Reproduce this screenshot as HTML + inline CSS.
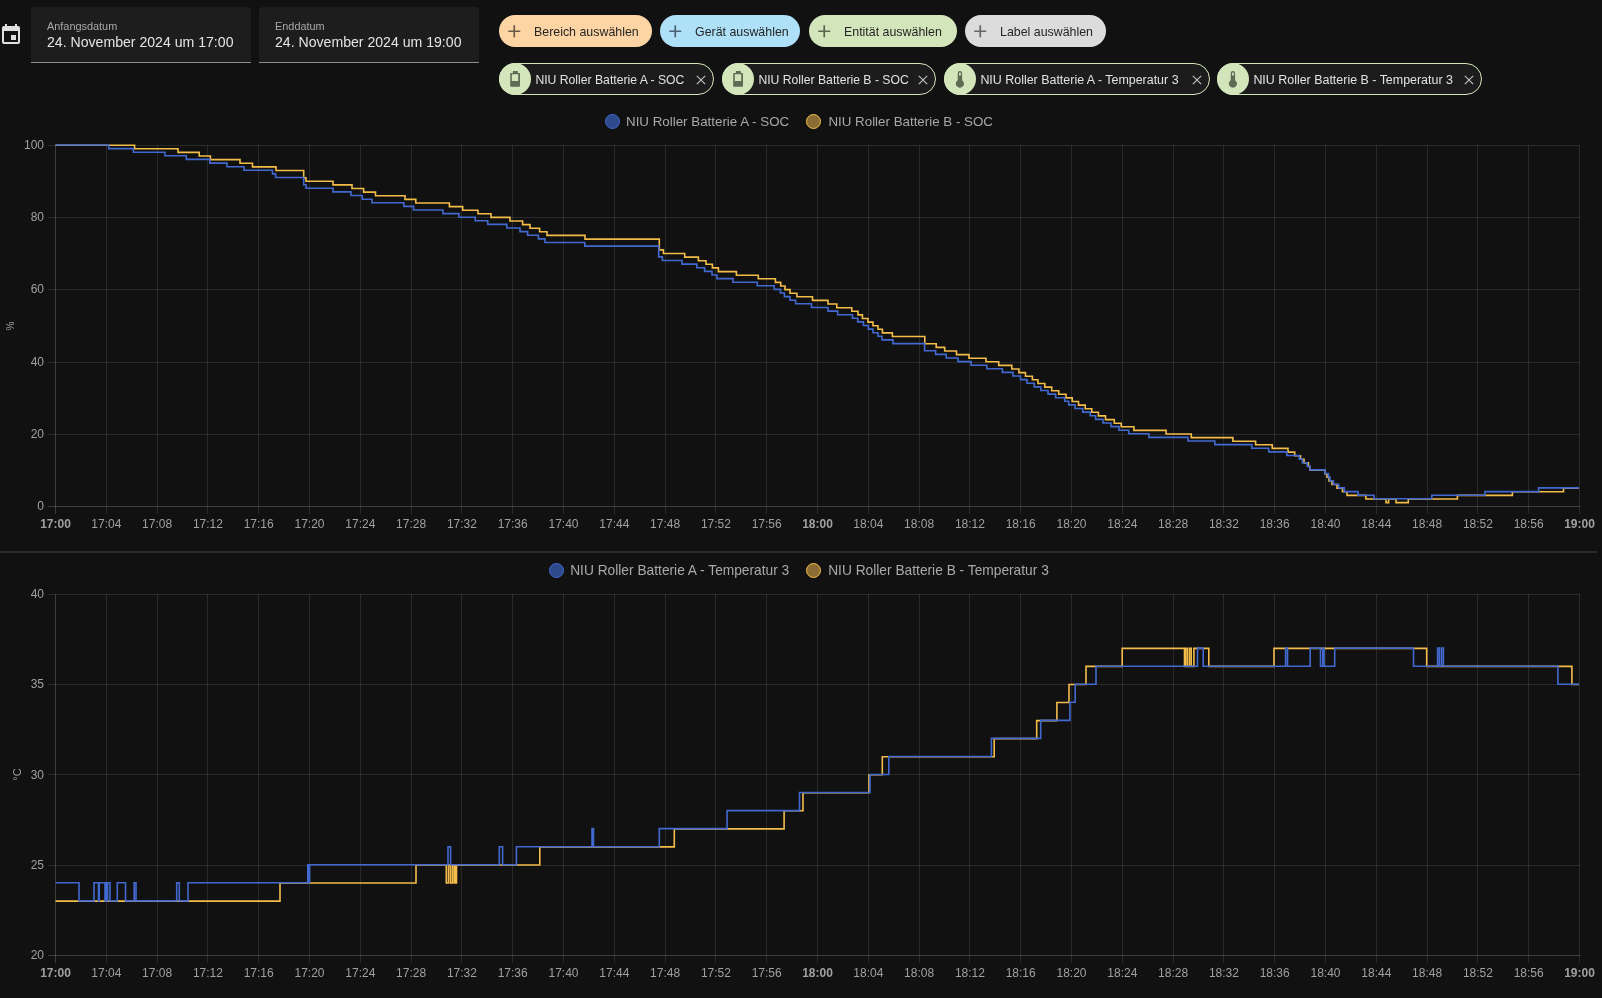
<!DOCTYPE html>
<html><head><meta charset="utf-8">
<style>
html,body{margin:0;padding:0;background:#111111;width:1602px;height:998px;overflow:hidden;font-family:"Liberation Sans",sans-serif;position:relative}
.abs{position:absolute}
.gs{position:absolute;left:0;top:0;width:1602px;height:998px;will-change:transform}
.field{position:absolute;top:7px;height:55px;width:220px;background:#1d1d1d;border-radius:4px 4px 0 0;border-bottom:1px solid #8c8c8c}
.field .lab{position:absolute;left:16px;top:11.2px;line-height:16px;font-size:10.9px;color:#a8a8a8;white-space:nowrap}
.field .val{position:absolute;left:16px;top:27.1px;line-height:16px;font-size:14.1px;color:#e4e4e4;white-space:nowrap}
.chip{position:absolute;top:15px;height:32px;border-radius:16px;font-size:12.4px;color:#262626;white-space:nowrap}
.chip .plus{position:absolute;left:4.7px;top:6px;width:20.5px;height:20.5px}
.chip .t{position:absolute;top:8.7px;line-height:16px}
.ent{position:absolute;top:63px;height:30px;box-sizing:content-box;border:1px solid #d3e6bb;border-radius:16px;background:#1c1c1c;color:#e2e2e2;font-size:12.2px;white-space:nowrap}
.ent .ic{position:absolute;left:-1px;top:-1px;width:32px;height:32px;border-radius:16px;background:#d3e6bb}
.ent .t{position:absolute;left:35.4px;top:8px;line-height:16px}
.ent .x{position:absolute;top:10.3px;width:12px;height:12px}
.lg{position:absolute;font-size:13.35px;line-height:16px;color:#a9a9a9;white-space:nowrap}
.dot{position:absolute;width:15px;height:15px;border-radius:50%;box-sizing:border-box;border:1.5px solid}
</style></head><body><div class="gs">
<!-- calendar icon -->
<svg class="abs" style="left:-1px;top:23px" width="24" height="24" viewBox="0 0 24 24"><path fill="#e1e1e1" d="M19 19H5V8h14m-3-7v2H8V1H6v2H5c-1.11 0-2 .89-2 2v14a2 2 0 0 0 2 2h14a2 2 0 0 0 2-2V5a2 2 0 0 0-2-2h-1V1m-1 11h-5v5h5z"/></svg>
<div class="field" style="left:31px"><div class="lab">Anfangsdatum</div><div class="val">24. November 2024 um 17:00</div></div>
<div class="field" style="left:259px"><div class="lab">Enddatum</div><div class="val">24. November 2024 um 19:00</div></div>

<div class="chip" style="left:499px;width:153px;background:#fdd5a5"><svg class="plus" viewBox="0 0 24 24"><path fill="#6b5a45" d="M19 13h-6v6h-2v-6H5v-2h6V5h2v6h6z"/></svg><span class="t" style="left:35px">Bereich auswählen</span></div>
<div class="chip" style="left:660px;width:140px;background:#aee0f8"><svg class="plus" viewBox="0 0 24 24"><path fill="#4a6270" d="M19 13h-6v6h-2v-6H5v-2h6V5h2v6h6z"/></svg><span class="t" style="left:35px">Gerät auswählen</span></div>
<div class="chip" style="left:809px;width:148px;background:#d3e6bb"><svg class="plus" viewBox="0 0 24 24"><path fill="#5a6650" d="M19 13h-6v6h-2v-6H5v-2h6V5h2v6h6z"/></svg><span class="t" style="left:35px">Entität auswählen</span></div>
<div class="chip" style="left:965px;width:141px;background:#dcdcdc"><svg class="plus" viewBox="0 0 24 24"><path fill="#666" d="M19 13h-6v6h-2v-6H5v-2h6V5h2v6h6z"/></svg><span class="t" style="left:35px">Label auswählen</span></div>

<div class="ent" style="left:499px;width:213px"><div class="ic"><svg width="32" height="32" style="position:absolute;left:0;top:0"><rect x="13.9" y="8" width="4.9" height="2" fill="#5f6b55"/><path fill="#5f6b55" fill-rule="evenodd" d="M12 10h8.2a.8.8 0 0 1 .8.8v12.2a.8.8 0 0 1-.8.8H12a.8.8 0 0 1-.8-.8V10.8a.8.8 0 0 1 .8-.8zM12.8 11.3v6.8h6.4v-6.8z"/></svg></div><span class="t">NIU Roller Batterie A - SOC</span><svg class="x" style="left:195.2px" viewBox="0 0 12 12"><path d="M1.8 1.8L10.2 10.2M10.2 1.8L1.8 10.2" stroke="#c4c4c4" stroke-width="1.1"/></svg></div>
<div class="ent" style="left:722px;width:211.5px"><div class="ic"><svg width="32" height="32" style="position:absolute;left:0;top:0"><rect x="13.9" y="8" width="4.9" height="2" fill="#5f6b55"/><path fill="#5f6b55" fill-rule="evenodd" d="M12 10h8.2a.8.8 0 0 1 .8.8v12.2a.8.8 0 0 1-.8.8H12a.8.8 0 0 1-.8-.8V10.8a.8.8 0 0 1 .8-.8zM12.8 11.3v6.8h6.4v-6.8z"/></svg></div><span class="t">NIU Roller Batterie B - SOC</span><svg class="x" style="left:193.7px" viewBox="0 0 12 12"><path d="M1.8 1.8L10.2 10.2M10.2 1.8L1.8 10.2" stroke="#c4c4c4" stroke-width="1.1"/></svg></div>
<div class="ent" style="left:944px;width:263.5px"><div class="ic"><svg width="32" height="32" style="position:absolute;left:0;top:0"><path fill="#5f6b55" d="M13.7 10.2a2.2 2.2 0 0 1 4.4 0V17.2a4.1 4.1 0 1 1-4.4 0z"/><rect x="15" y="9.6" width="1.9" height="3" rx="0.9" fill="#d3e6bb"/></svg></div><span class="t" style="font-size:12.45px">NIU Roller Batterie A - Temperatur 3</span><svg class="x" style="left:245.7px" viewBox="0 0 12 12"><path d="M1.8 1.8L10.2 10.2M10.2 1.8L1.8 10.2" stroke="#c4c4c4" stroke-width="1.1"/></svg></div>
<div class="ent" style="left:1217px;width:262.5px"><div class="ic"><svg width="32" height="32" style="position:absolute;left:0;top:0"><path fill="#5f6b55" d="M13.7 10.2a2.2 2.2 0 0 1 4.4 0V17.2a4.1 4.1 0 1 1-4.4 0z"/><rect x="15" y="9.6" width="1.9" height="3" rx="0.9" fill="#d3e6bb"/></svg></div><span class="t" style="font-size:12.45px">NIU Roller Batterie B - Temperatur 3</span><svg class="x" style="left:244.7px" viewBox="0 0 12 12"><path d="M1.8 1.8L10.2 10.2M10.2 1.8L1.8 10.2" stroke="#c4c4c4" stroke-width="1.1"/></svg></div>
<svg width="1602" height="998" style="position:absolute;left:0;top:0">
<g stroke-width="1" shape-rendering="crispEdges"><line stroke="#fff" stroke-opacity="0.19" x1="55.5" y1="145" x2="55.5" y2="514"/><line stroke="#fff" stroke-opacity="0.1" x1="106.5" y1="145" x2="106.5" y2="514"/><line stroke="#fff" stroke-opacity="0.1" x1="157.5" y1="145" x2="157.5" y2="514"/><line stroke="#fff" stroke-opacity="0.1" x1="207.5" y1="145" x2="207.5" y2="514"/><line stroke="#fff" stroke-opacity="0.1" x1="258.5" y1="145" x2="258.5" y2="514"/><line stroke="#fff" stroke-opacity="0.1" x1="309.5" y1="145" x2="309.5" y2="514"/><line stroke="#fff" stroke-opacity="0.1" x1="360.5" y1="145" x2="360.5" y2="514"/><line stroke="#fff" stroke-opacity="0.1" x1="411.5" y1="145" x2="411.5" y2="514"/><line stroke="#fff" stroke-opacity="0.1" x1="461.5" y1="145" x2="461.5" y2="514"/><line stroke="#fff" stroke-opacity="0.1" x1="512.5" y1="145" x2="512.5" y2="514"/><line stroke="#fff" stroke-opacity="0.1" x1="563.5" y1="145" x2="563.5" y2="514"/><line stroke="#fff" stroke-opacity="0.1" x1="614.5" y1="145" x2="614.5" y2="514"/><line stroke="#fff" stroke-opacity="0.1" x1="665.5" y1="145" x2="665.5" y2="514"/><line stroke="#fff" stroke-opacity="0.1" x1="715.5" y1="145" x2="715.5" y2="514"/><line stroke="#fff" stroke-opacity="0.1" x1="766.5" y1="145" x2="766.5" y2="514"/><line stroke="#fff" stroke-opacity="0.1" x1="817.5" y1="145" x2="817.5" y2="514"/><line stroke="#fff" stroke-opacity="0.1" x1="868.5" y1="145" x2="868.5" y2="514"/><line stroke="#fff" stroke-opacity="0.1" x1="919.5" y1="145" x2="919.5" y2="514"/><line stroke="#fff" stroke-opacity="0.1" x1="969.5" y1="145" x2="969.5" y2="514"/><line stroke="#fff" stroke-opacity="0.1" x1="1020.5" y1="145" x2="1020.5" y2="514"/><line stroke="#fff" stroke-opacity="0.1" x1="1071.5" y1="145" x2="1071.5" y2="514"/><line stroke="#fff" stroke-opacity="0.1" x1="1122.5" y1="145" x2="1122.5" y2="514"/><line stroke="#fff" stroke-opacity="0.1" x1="1173.5" y1="145" x2="1173.5" y2="514"/><line stroke="#fff" stroke-opacity="0.1" x1="1223.5" y1="145" x2="1223.5" y2="514"/><line stroke="#fff" stroke-opacity="0.1" x1="1274.5" y1="145" x2="1274.5" y2="514"/><line stroke="#fff" stroke-opacity="0.1" x1="1325.5" y1="145" x2="1325.5" y2="514"/><line stroke="#fff" stroke-opacity="0.1" x1="1376.5" y1="145" x2="1376.5" y2="514"/><line stroke="#fff" stroke-opacity="0.1" x1="1427.5" y1="145" x2="1427.5" y2="514"/><line stroke="#fff" stroke-opacity="0.1" x1="1477.5" y1="145" x2="1477.5" y2="514"/><line stroke="#fff" stroke-opacity="0.1" x1="1528.5" y1="145" x2="1528.5" y2="514"/><line stroke="#fff" stroke-opacity="0.1" x1="1579.5" y1="145" x2="1579.5" y2="514"/><line stroke="#fff" stroke-opacity="0.19" x1="48" y1="506.5" x2="1579.5" y2="506.5"/><line stroke="#fff" stroke-opacity="0.1" x1="48" y1="434.5" x2="1579.5" y2="434.5"/><line stroke="#fff" stroke-opacity="0.1" x1="48" y1="362.5" x2="1579.5" y2="362.5"/><line stroke="#fff" stroke-opacity="0.1" x1="48" y1="289.5" x2="1579.5" y2="289.5"/><line stroke="#fff" stroke-opacity="0.1" x1="48" y1="217.5" x2="1579.5" y2="217.5"/><line stroke="#fff" stroke-opacity="0.1" x1="48" y1="145.5" x2="1579.5" y2="145.5"/><line stroke="#fff" stroke-opacity="0.19" x1="55.5" y1="594" x2="55.5" y2="963"/><line stroke="#fff" stroke-opacity="0.1" x1="106.5" y1="594" x2="106.5" y2="963"/><line stroke="#fff" stroke-opacity="0.1" x1="157.5" y1="594" x2="157.5" y2="963"/><line stroke="#fff" stroke-opacity="0.1" x1="207.5" y1="594" x2="207.5" y2="963"/><line stroke="#fff" stroke-opacity="0.1" x1="258.5" y1="594" x2="258.5" y2="963"/><line stroke="#fff" stroke-opacity="0.1" x1="309.5" y1="594" x2="309.5" y2="963"/><line stroke="#fff" stroke-opacity="0.1" x1="360.5" y1="594" x2="360.5" y2="963"/><line stroke="#fff" stroke-opacity="0.1" x1="411.5" y1="594" x2="411.5" y2="963"/><line stroke="#fff" stroke-opacity="0.1" x1="461.5" y1="594" x2="461.5" y2="963"/><line stroke="#fff" stroke-opacity="0.1" x1="512.5" y1="594" x2="512.5" y2="963"/><line stroke="#fff" stroke-opacity="0.1" x1="563.5" y1="594" x2="563.5" y2="963"/><line stroke="#fff" stroke-opacity="0.1" x1="614.5" y1="594" x2="614.5" y2="963"/><line stroke="#fff" stroke-opacity="0.1" x1="665.5" y1="594" x2="665.5" y2="963"/><line stroke="#fff" stroke-opacity="0.1" x1="715.5" y1="594" x2="715.5" y2="963"/><line stroke="#fff" stroke-opacity="0.1" x1="766.5" y1="594" x2="766.5" y2="963"/><line stroke="#fff" stroke-opacity="0.1" x1="817.5" y1="594" x2="817.5" y2="963"/><line stroke="#fff" stroke-opacity="0.1" x1="868.5" y1="594" x2="868.5" y2="963"/><line stroke="#fff" stroke-opacity="0.1" x1="919.5" y1="594" x2="919.5" y2="963"/><line stroke="#fff" stroke-opacity="0.1" x1="969.5" y1="594" x2="969.5" y2="963"/><line stroke="#fff" stroke-opacity="0.1" x1="1020.5" y1="594" x2="1020.5" y2="963"/><line stroke="#fff" stroke-opacity="0.1" x1="1071.5" y1="594" x2="1071.5" y2="963"/><line stroke="#fff" stroke-opacity="0.1" x1="1122.5" y1="594" x2="1122.5" y2="963"/><line stroke="#fff" stroke-opacity="0.1" x1="1173.5" y1="594" x2="1173.5" y2="963"/><line stroke="#fff" stroke-opacity="0.1" x1="1223.5" y1="594" x2="1223.5" y2="963"/><line stroke="#fff" stroke-opacity="0.1" x1="1274.5" y1="594" x2="1274.5" y2="963"/><line stroke="#fff" stroke-opacity="0.1" x1="1325.5" y1="594" x2="1325.5" y2="963"/><line stroke="#fff" stroke-opacity="0.1" x1="1376.5" y1="594" x2="1376.5" y2="963"/><line stroke="#fff" stroke-opacity="0.1" x1="1427.5" y1="594" x2="1427.5" y2="963"/><line stroke="#fff" stroke-opacity="0.1" x1="1477.5" y1="594" x2="1477.5" y2="963"/><line stroke="#fff" stroke-opacity="0.1" x1="1528.5" y1="594" x2="1528.5" y2="963"/><line stroke="#fff" stroke-opacity="0.1" x1="1579.5" y1="594" x2="1579.5" y2="963"/><line stroke="#fff" stroke-opacity="0.19" x1="48" y1="955.5" x2="1579.5" y2="955.5"/><line stroke="#fff" stroke-opacity="0.1" x1="48" y1="865.5" x2="1579.5" y2="865.5"/><line stroke="#fff" stroke-opacity="0.1" x1="48" y1="774.5" x2="1579.5" y2="774.5"/><line stroke="#fff" stroke-opacity="0.1" x1="48" y1="684.5" x2="1579.5" y2="684.5"/><line stroke="#fff" stroke-opacity="0.1" x1="48" y1="594.5" x2="1579.5" y2="594.5"/></g>
<g fill="#a0a0a0" font-family="Liberation Sans, sans-serif" font-size="12">
<text x="44" y="510.0" text-anchor="end">0</text><text x="44" y="437.8" text-anchor="end">20</text><text x="44" y="365.6" text-anchor="end">40</text><text x="44" y="293.4" text-anchor="end">60</text><text x="44" y="221.2" text-anchor="end">80</text><text x="44" y="149.0" text-anchor="end">100</text>
<text x="44" y="959.0" text-anchor="end">20</text><text x="44" y="868.8" text-anchor="end">25</text><text x="44" y="778.5" text-anchor="end">30</text><text x="44" y="688.2" text-anchor="end">35</text><text x="44" y="598.0" text-anchor="end">40</text>
<text x="55.5" y="528" text-anchor="middle" font-weight="bold">17:00</text><text x="106.3" y="528" text-anchor="middle">17:04</text><text x="157.1" y="528" text-anchor="middle">17:08</text><text x="207.9" y="528" text-anchor="middle">17:12</text><text x="258.7" y="528" text-anchor="middle">17:16</text><text x="309.5" y="528" text-anchor="middle">17:20</text><text x="360.3" y="528" text-anchor="middle">17:24</text><text x="411.1" y="528" text-anchor="middle">17:28</text><text x="461.9" y="528" text-anchor="middle">17:32</text><text x="512.7" y="528" text-anchor="middle">17:36</text><text x="563.5" y="528" text-anchor="middle">17:40</text><text x="614.3" y="528" text-anchor="middle">17:44</text><text x="665.1" y="528" text-anchor="middle">17:48</text><text x="715.9" y="528" text-anchor="middle">17:52</text><text x="766.7" y="528" text-anchor="middle">17:56</text><text x="817.5" y="528" text-anchor="middle" font-weight="bold">18:00</text><text x="868.3" y="528" text-anchor="middle">18:04</text><text x="919.1" y="528" text-anchor="middle">18:08</text><text x="969.9" y="528" text-anchor="middle">18:12</text><text x="1020.7" y="528" text-anchor="middle">18:16</text><text x="1071.5" y="528" text-anchor="middle">18:20</text><text x="1122.3" y="528" text-anchor="middle">18:24</text><text x="1173.1" y="528" text-anchor="middle">18:28</text><text x="1223.9" y="528" text-anchor="middle">18:32</text><text x="1274.7" y="528" text-anchor="middle">18:36</text><text x="1325.5" y="528" text-anchor="middle">18:40</text><text x="1376.3" y="528" text-anchor="middle">18:44</text><text x="1427.1" y="528" text-anchor="middle">18:48</text><text x="1477.9" y="528" text-anchor="middle">18:52</text><text x="1528.7" y="528" text-anchor="middle">18:56</text><text x="1579.5" y="528" text-anchor="middle" font-weight="bold">19:00</text>
<text x="55.5" y="977" text-anchor="middle" font-weight="bold">17:00</text><text x="106.3" y="977" text-anchor="middle">17:04</text><text x="157.1" y="977" text-anchor="middle">17:08</text><text x="207.9" y="977" text-anchor="middle">17:12</text><text x="258.7" y="977" text-anchor="middle">17:16</text><text x="309.5" y="977" text-anchor="middle">17:20</text><text x="360.3" y="977" text-anchor="middle">17:24</text><text x="411.1" y="977" text-anchor="middle">17:28</text><text x="461.9" y="977" text-anchor="middle">17:32</text><text x="512.7" y="977" text-anchor="middle">17:36</text><text x="563.5" y="977" text-anchor="middle">17:40</text><text x="614.3" y="977" text-anchor="middle">17:44</text><text x="665.1" y="977" text-anchor="middle">17:48</text><text x="715.9" y="977" text-anchor="middle">17:52</text><text x="766.7" y="977" text-anchor="middle">17:56</text><text x="817.5" y="977" text-anchor="middle" font-weight="bold">18:00</text><text x="868.3" y="977" text-anchor="middle">18:04</text><text x="919.1" y="977" text-anchor="middle">18:08</text><text x="969.9" y="977" text-anchor="middle">18:12</text><text x="1020.7" y="977" text-anchor="middle">18:16</text><text x="1071.5" y="977" text-anchor="middle">18:20</text><text x="1122.3" y="977" text-anchor="middle">18:24</text><text x="1173.1" y="977" text-anchor="middle">18:28</text><text x="1223.9" y="977" text-anchor="middle">18:32</text><text x="1274.7" y="977" text-anchor="middle">18:36</text><text x="1325.5" y="977" text-anchor="middle">18:40</text><text x="1376.3" y="977" text-anchor="middle">18:44</text><text x="1427.1" y="977" text-anchor="middle">18:48</text><text x="1477.9" y="977" text-anchor="middle">18:52</text><text x="1528.7" y="977" text-anchor="middle">18:56</text><text x="1579.5" y="977" text-anchor="middle" font-weight="bold">19:00</text>
<text transform="translate(13.8,326) rotate(-90)" text-anchor="middle" font-size="10">%</text>
<text transform="translate(21.2,774.5) rotate(-90)" text-anchor="middle" font-size="11">°C</text>
</g>
<rect x="0" y="551" width="1597" height="2" fill="#2a2a2a"/>
<g fill="none" stroke-width="1.6" stroke-linejoin="miter">
<path stroke="#f4bd4a" d="M55.5 145.2H134.6V148.8H178.0V152.4H199.2V156.0H210.4V159.6H240.0V163.2H252.5V166.9H276.0V170.5H303.7V177.7H306.0V181.3H333.0V184.9H352.0V188.5H363.6V192.1H375.5V195.7H405.0V199.4H415.8V203.0H449.4V206.6H462.7V210.2H478.0V213.8H491.0V217.4H510.0V221.0H522.6V224.6H530.0V228.2H539.6V231.8H547.0V235.4H585.0V239.1H659.3V249.9H663.4V253.5H684.7V257.1H698.4V260.7H706.0V264.3H712.4V267.9H718.4V271.6H736.4V275.2H758.3V278.8H775.4V282.4H780.7V286.0H785.0V289.6H790.0V293.2H796.9V296.8H812.5V300.4H828.0V304.0H836.8V307.7H851.8V311.3H858.0V314.9H862.4V318.5H868.0V322.1H873.0V325.7H878.0V329.3H882.4V332.9H892.4V336.5H924.8V343.8H936.2V347.4H944.7V351.0H956.5V354.6H969.0V358.2H986.0V361.8H998.7V365.4H1011.8V369.0H1018.9V372.6H1025.5V376.2H1032.4V379.8H1038.0V383.5H1044.8V387.1H1051.7V390.7H1058.7V394.3H1066.0V397.9H1072.2V401.5H1078.5V405.1H1085.2V408.7H1091.8V412.3H1098.4V415.9H1105.5V419.6H1114.3V423.2H1121.2V426.8H1133.9V430.4H1166.1V434.0H1191.3V437.6H1232.9V441.2H1255.6V444.8H1272.2V448.4H1288.0V452.1H1294.7V455.7H1300.5V459.3H1304.0V462.9H1308.4V466.5H1310.0V470.1H1325.0V473.7H1327.0V477.3H1329.0V480.9H1332.0V484.5H1337.0V488.1H1342.5V491.8H1347.0V495.4H1365.9V499.0H1386.0V502.6H1388.6V499.0H1396.0V502.6H1408.3V499.0H1457.4V495.4H1512.4V491.8H1563.5V488.1H1579.0"/>
<path stroke="#4269d0" d="M55.5 145.0H108.7V148.6H133.4V152.2H164.9V155.8H186.3V159.4H209.8V163.1H227.0V166.7H244.0V170.3H272.5V173.9H275.6V177.5H303.7V184.7H306.0V188.3H333.0V191.9H351.0V195.5H362.3V199.2H372.0V202.8H403.8V206.4H413.5V210.0H443.0V213.6H459.0V217.2H475.2V220.8H487.7V224.4H506.8V228.0H520.0V231.6H527.6V235.2H538.4V238.9H544.9V242.5H584.8V246.1H658.7V256.9H662.4V260.5H682.0V264.1H696.8V267.7H704.6V271.4H712.0V275.0H717.0V278.6H733.0V282.2H757.3V285.8H774.2V289.4H780.5V293.0H784.4V296.6H790.0V300.2H795.6V303.8H811.5V307.5H828.0V311.1H837.7V314.7H852.4V318.3H857.7V321.9H863.4V325.5H868.4V329.1H873.0V332.7H878.0V336.3H882.0V339.9H893.0V343.6H924.6V350.8H935.6V354.4H946.2V358.0H958.0V361.6H971.2V365.2H986.8V368.8H1002.4V372.4H1013.0V376.0H1020.5V379.6H1027.0V383.3H1034.2V386.9H1040.8V390.5H1048.0V394.1H1055.6V397.7H1064.7V401.3H1068.7V404.9H1075.0V408.5H1082.7V412.1H1090.2V415.8H1095.6V419.4H1103.0V423.0H1111.0V426.6H1119.0V430.2H1128.7V433.8H1148.9V437.4H1188.0V441.0H1214.8V444.6H1251.8V448.2H1268.7V451.9H1286.8V455.5H1299.3V459.1H1302.4V462.7H1307.2V466.3H1310.0V469.9H1325.0V473.5H1328.4V477.1H1330.0V480.7H1333.4V484.3H1338.7V487.9H1344.3V491.6H1358.0V495.2H1374.0V498.8H1431.8V495.2H1484.9V491.6H1538.6V487.9H1579.0"/>
<path stroke="#f4bd4a" d="M55.5 901.1H280.0V883.0H416.0V865.0H446.3V883.0H448.5V865.0H450.5V883.0H452.5V865.0H454.3V883.0H455.3V865.0H455.8V883.0H456.5V865.0H539.8V846.9H674.3V828.9H784.1V810.8H803.0V792.8H869.0V774.7H882.3V756.7H994.2V738.6H1036.7V720.6H1056.9V702.5H1069.0V684.5H1086.0V666.4H1122.2V648.4H1184.5V666.4H1185.5V648.4H1187.3V666.4H1189.4V648.4H1191.2V666.4H1193.9V648.4H1208.8V666.4H1274.0V648.4H1426.7V666.4H1571.9V684.5H1579.0"/>
<path stroke="#4269d0" d="M55.5 882.8H79.0V900.9H94.0V882.8H98.5V900.9H99.2V882.8H105.0V900.9H105.6V882.8H107.0V900.9H107.6V882.8H110.0V900.9H117.3V882.8H125.5V900.9H134.2V882.8H136.0V900.9H176.7V882.8H179.3V900.9H188.0V882.8H307.8V864.8H308.8V882.8H309.6V864.8H448.0V846.7H450.6V864.8H499.3V846.7H502.6V864.8H516.4V846.7H592.0V828.6H593.5V846.7H659.3V828.6H727.1V810.6H799.5V792.5H870.0V774.5H888.8V756.5H991.4V738.4H1040.7V720.4H1069.9V702.3H1075.2V684.2H1096.0V666.2H1197.5V648.1H1203.2V666.2H1285.6V648.1H1287.5V666.2H1310.2V648.1H1320.5V666.2H1322.8V648.1H1324.0V666.2H1334.7V648.1H1413.5V666.2H1437.6V648.1H1439.4V666.2H1441.5V648.1H1443.4V666.2H1557.9V684.2H1579.0"/>
</g>
</svg>
<span class="dot" style="left:604.5px;top:113.5px;background:#2f4a8c;border-color:#4269d0"></span><span class="lg" style="left:626px;top:113.9px">NIU Roller Batterie A - SOC</span>
<span class="dot" style="left:806.3px;top:113.5px;background:#8a6d35;border-color:#f4bd4a"></span><span class="lg" style="left:828.4px;top:113.9px">NIU Roller Batterie B - SOC</span>
<span class="dot" style="left:548.5px;top:563px;background:#2f4a8c;border-color:#4269d0"></span><span class="lg" style="left:570.2px;top:562.6px;font-size:13.75px">NIU Roller Batterie A - Temperatur 3</span>
<span class="dot" style="left:806.3px;top:563px;background:#8a6d35;border-color:#f4bd4a"></span><span class="lg" style="left:828.2px;top:562.6px;font-size:13.75px">NIU Roller Batterie B - Temperatur 3</span>
</div></body></html>
